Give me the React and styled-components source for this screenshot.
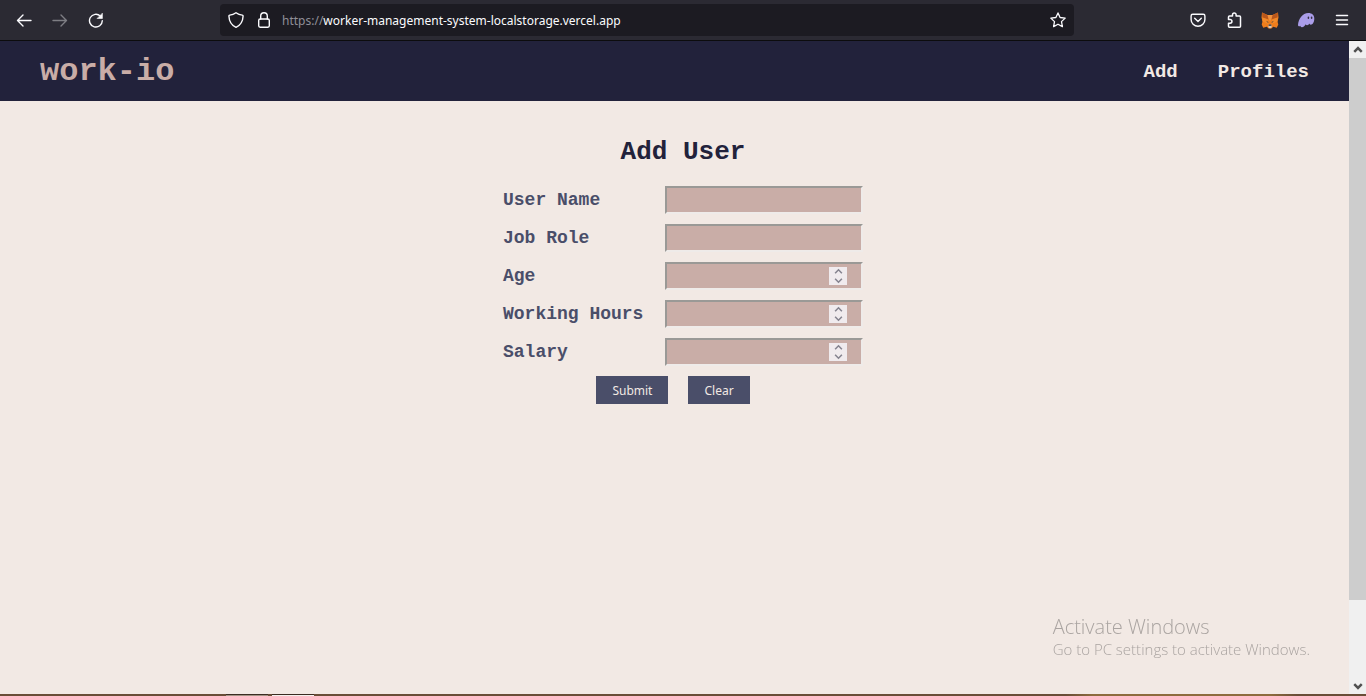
import React, { useRef } from "react";
import styled, { createGlobalStyle } from "styled-components";

const mono = '"Liberation Mono", "Courier New", monospace';
const sans = '"Noto Sans", "Open Sans", sans-serif';
const light = '"Open Sans", "Noto Sans", sans-serif';

const GlobalStyle = createGlobalStyle`
  *, *::before, *::after { box-sizing: border-box; }
  body { margin: 0; background: #f2e9e4; font-family: ${sans}; }
  button, input { font: inherit; }
`;

const Window = styled.div`
  display: flex;
  flex-direction: column;
  min-height: 100vh;
`;

const Toolbar = styled.div`
  display: flex;
  align-items: center;
  height: 41px;
  padding: 0 12px;
  background: #2b2a33;
  border-bottom: 1px solid #0c0c0d;
`;

const ToolGroup = styled.div`
  display: flex;
  align-items: center;
  gap: 12px;
`;

const IconButton = styled.button`
  display: flex;
  align-items: center;
  justify-content: center;
  flex: none;
  width: 24px;
  height: 24px;
  padding: 0;
  border: 0;
  background: none;
  color: #fbfbfe;
  opacity: ${(p) => (p.disabled ? 0.4 : 1)};
`;

const AddressBar = styled.div`
  display: flex;
  align-items: center;
  flex: 1;
  gap: 4px;
  height: 32px;
  margin: 0 112px;
  padding: 0 4px;
  border-radius: 4px;
  background: #1c1b22;
`;

const Url = styled.a`
  flex: 1;
  margin-left: 2px;
  padding-top: 2px;
  color: #fbfbfe;
  font-size: 12px;
  line-height: 20px;
  text-decoration: none;
  white-space: nowrap;
`;

const Scheme = styled.span`
  color: #8f8f98;
`;

const Viewport = styled.div`
  display: flex;
  flex: 1;
`;

const Page = styled.div`
  display: flex;
  flex-direction: column;
  flex: 1;
  min-width: 0;
  background: #f2e9e4;
`;

const Header = styled.header`
  display: flex;
  align-items: center;
  justify-content: space-between;
  height: 60px;
  padding: 2px 40px 0;
  background: #22223b;
  font-family: ${mono};
  font-weight: 700;
`;

const Brand = styled.a`
  color: #c9ada7;
  font-size: 32px;
  line-height: 36px;
  text-decoration: none;
`;

const Nav = styled.nav`
  display: flex;
  gap: 40px;
`;

const NavLink = styled.a`
  color: #f2e9e4;
  font-size: 19px;
  line-height: 24px;
  text-decoration: none;
`;

const Main = styled.main`
  display: flex;
  flex-direction: column;
  align-items: center;
  flex: 1;
  padding: 36px 0 0 17px;
`;

const Title = styled.h1`
  margin: 0 0 18px;
  color: #22223b;
  font-family: ${mono};
  font-size: 26px;
  font-weight: 700;
  line-height: 31px;
`;

const Form = styled.form`
  display: flex;
  flex-direction: column;
  gap: 10px;
`;

const Row = styled.div`
  display: grid;
  grid-template-columns: 162px 198px;
  align-items: center;
`;

const Label = styled.label`
  color: #4a4e69;
  font-family: ${mono};
  font-size: 18px;
  font-weight: 700;
  line-height: 24px;
`;

const Control = styled.div`
  position: relative;
  display: flex;
`;

const Input = styled.input`
  width: 100%;
  height: 28px;
  padding: 0 14px 0 6px;
  border: 2px solid;
  border-color: #9a9996 #efebe9 #efebe9 #9a9996;
  border-radius: 0;
  outline: 0;
  background: #c9ada7;
  color: #22223b;
  font-size: 12px;
  appearance: textfield;

  &::-webkit-inner-spin-button {
    appearance: none;
  }
`;

const Stepper = styled.div`
  position: absolute;
  top: 5px;
  right: 16px;
  display: flex;
  flex-direction: column;
  width: 18px;
  height: 18px;
  background: #f0ebee;
`;

const Step = styled.button`
  display: flex;
  align-items: center;
  justify-content: center;
  flex: 1;
  padding: 0;
  border: 0;
  background: none;
  color: #85838f;
`;

const Actions = styled.div`
  display: flex;
  justify-content: center;
`;

const Button = styled.button`
  height: 28px;
  margin-right: 20px;
  padding: 2px 16px 0;
  border: 0;
  background: #4a4e69;
  color: #f2e9e4;
  font-size: 12px;
  line-height: 20px;
`;

const Watermark = styled.aside`
  position: fixed;
  right: 56px;
  bottom: 37px;
  color: #aaa4a1;
  font-family: ${light};
  font-weight: 300;
`;

const WatermarkTitle = styled.div`
  font-size: 20px;
  line-height: 24px;
`;

const WatermarkText = styled.div`
  font-size: 15px;
  line-height: 20px;
`;

const Scrollbar = styled.div`
  display: flex;
  flex-direction: column;
  width: 17px;
  background: #f0f0f0;
`;

const ScrollArrow = styled.div`
  display: flex;
  align-items: center;
  justify-content: center;
  height: 17px;
  color: #505050;
`;

const Thumb = styled.div`
  flex: 7;
  background: #cdcdcd;
`;

const ThumbRest = styled.div`
  flex: 1;
`;

const Taskbar = styled.div`
  display: flex;
  height: 2px;
  padding-left: 226px;
  gap: 4px;
  background: linear-gradient(90deg, #694d37 0 78%, #8d6b3d 80% 93%, #694d37 95%);
`;

const TaskItem = styled.div`
  width: 42px;
  border-top: 1px solid #3b2c22;
  background: ${(p) => (p.$active ? "#f5efec" : "#a39385")};
`;

function Stroke({ children, size = 16, width = 1.4 }) {
  return (
    <svg width={size} height={size} viewBox="0 0 16 16" fill="none" stroke="currentColor"
      strokeWidth={width} strokeLinecap="round" strokeLinejoin="round" aria-hidden="true">
      {children}
    </svg>
  );
}

const BackIcon = () => <Stroke><path d="M15 8.5H1.5M7 3 1.5 8.5 7 14" /></Stroke>;
const ForwardIcon = () => <Stroke><path d="M1 8.5h13.5M9 3l5.500 5.500L9 14" /></Stroke>;
const ReloadIcon = () => (
  <Stroke>
    <path d="M14.300 8.800A6.400 6.400 0 1 1 12.300 4" />
    <path d="M14.400 1.500v5h-5z" fill="currentColor" strokeWidth="0.6" />
  </Stroke>
);
const ShieldIcon = () => (
  <Stroke>
    <path d="M8 .8c2 1.500 4.300 2.200 6.300 2.300.5.1.8.400.8.900-.2 5.200-2.500 9.200-7.100 11.300C3.400 13.200 1.100 9.200.9 4c0-.5.300-.8.8-.9C3.700 3 6 2.300 8 .8z" />
  </Stroke>
);
const LockIcon = () => (
  <Stroke>
    <rect x="2.700" y="7" width="10.600" height="8.200" rx="1.400" />
    <path d="M4.700 7V4a3.300 3.300 0 0 1 6.600 0v3" />
  </Stroke>
);
const StarIcon = () => (
  <Stroke width={1.3}>
    <path d="m8 .9 2.100 4.600 5.100.6-3.700 3.500.9 5-4.400-2.400-4.400 2.400.9-5L.8 6.100l5.100-.6z" />
  </Stroke>
);
const PocketIcon = () => (
  <Stroke>
    <path d="M2.700 2.300h10.600c.9 0 1.600.7 1.600 1.600v3.500a6.900 6.900 0 0 1-13.800 0V3.900c0-.9.7-1.600 1.600-1.600z" />
    <path d="m4.700 6.300 3.300 3.200 3.300-3.200" />
  </Stroke>
);
const PuzzleIcon = () => (
  <Stroke width={1.5}>
    <path d="M2.500 6V5c0-.6.4-1 1-1h3V2.700a1.800 1.800 0 0 1 3.600 0V4h3.400c.6 0 1 .4 1 1v9.200c0 .6-.4 1-1 1h-10c-.6 0-1-.4-1-1v-3h1.600a1.800 1.800 0 0 0 0-3.700H2.500z" />
  </Stroke>
);
const FoxIcon = () => (
  <svg width="18" height="18" viewBox="0 0 18 18" aria-hidden="true">
    <path d="M1 1.500 6.500 4h5L17 1.500l.5 5-1 4 .8 3-1.500 3.300-3.600-1-1.700 1.700h-3l-1.700-1.700-3.600 1L.7 13.500l.8-3-1-4z" fill="#ee7d1c" />
    <path d="M1 1.500 6.500 4 8 8.500l-6.500-2zM17 1.500 11.500 4 10 8.500l6.500-2z" fill="#b9571c" />
    <path d="M6.500 4h5L10 9.500H8z" fill="#f0923e" />
    <path d="m1.500 6.500 5 2 1 4.500-6-2.500zM16.500 6.500l-5 2-1 4.500 6-2.500z" fill="#f28a2a" />
    <path d="m5 9.800 2.300 1.200-.2 1zM13 9.800 10.700 11l.2 1z" fill="#31363f" />
    <path d="m7.500 14.500.3-1h2.400l.3 1 .2 2-1.200.7h-1l-1.200-.7z" fill="#d7c6b7" />
    <path d="M7.800 13.500h2.400l.3 1.200h-3z" fill="#292b30" />
  </svg>
);
const GhostIcon = () => (
  <svg width="18" height="18" viewBox="0 0 18 18" aria-hidden="true">
    <path d="M1 14C1.500 7.800 5.500 2 11.300 2c3.700 0 6 2.200 6 5.500 0 3.600-1.700 6.200-3.500 6.200-.8 0-1.300-.5-1.400-1.200-.6 1-1.400 1.700-2.300 1.700-.7 0-1.100-.4-1.300-.9-.8 1.300-2.200 2.900-4 2.900-1 0-1.400-.6-1.300-1.400-.7.900-2.600.7-2.500-.8z" fill="#aa9de9" />
    <ellipse cx="11.400" cy="6.800" rx=".8" ry="1.300" fill="#373145" />
    <ellipse cx="14.600" cy="6.800" rx=".8" ry="1.300" fill="#373145" />
  </svg>
);
const MenuIcon = () => <Stroke width={1.5}><path d="M2.500 3.500h11M2.500 8h11M2.500 12.500h11" /></Stroke>;

function Chevron({ down, size = 9, width = 1.4 }) {
  return (
    <svg width={size} height={size} viewBox="0 0 8 8" fill="none" stroke="currentColor"
      strokeWidth={width} aria-hidden="true">
      <path d={down ? "M1 2.500 4 5.500 7 2.500" : "M1 5.500 4 2.500 7 5.500"} />
    </svg>
  );
}

function Field({ id, label, type = "text" }) {
  const input = useRef(null);
  return (
    <Row>
      <Label htmlFor={id}>{label}</Label>
      <Control>
        <Input id={id} name={id} type={type} ref={input} />
        {type === "number" && (
          <Stepper>
            <Step type="button" aria-label={`Increase ${label}`} onClick={() => input.current.stepUp()}>
              <Chevron />
            </Step>
            <Step type="button" aria-label={`Decrease ${label}`} onClick={() => input.current.stepDown()}>
              <Chevron down />
            </Step>
          </Stepper>
        )}
      </Control>
    </Row>
  );
}

export default function App() {
  return (
    <Window>
      <GlobalStyle />
      <Toolbar>
        <ToolGroup>
          <IconButton aria-label="Back"><BackIcon /></IconButton>
          <IconButton aria-label="Forward" disabled><ForwardIcon /></IconButton>
          <IconButton aria-label="Reload"><ReloadIcon /></IconButton>
        </ToolGroup>
        <AddressBar>
          <IconButton aria-label="Tracking protection"><ShieldIcon /></IconButton>
          <IconButton aria-label="Connection security"><LockIcon /></IconButton>
          <Url href="#"><Scheme>https://</Scheme>worker-management-system-localstorage.vercel.app</Url>
          <IconButton aria-label="Bookmark this page"><StarIcon /></IconButton>
        </AddressBar>
        <ToolGroup>
          <IconButton aria-label="Pocket"><PocketIcon /></IconButton>
          <IconButton aria-label="Extensions"><PuzzleIcon /></IconButton>
          <IconButton aria-label="Fox wallet"><FoxIcon /></IconButton>
          <IconButton aria-label="Ghost wallet"><GhostIcon /></IconButton>
          <IconButton aria-label="Menu"><MenuIcon /></IconButton>
        </ToolGroup>
      </Toolbar>
      <Viewport>
        <Page>
          <Header>
            <Brand href="#">work-io</Brand>
            <Nav>
              <NavLink href="#add">Add</NavLink>
              <NavLink href="#profiles">Profiles</NavLink>
            </Nav>
          </Header>
          <Main>
            <Title>Add User</Title>
            <Form onSubmit={(e) => e.preventDefault()}>
              <Field id="name" label="User Name" />
              <Field id="role" label="Job Role" />
              <Field id="age" label="Age" type="number" />
              <Field id="hours" label="Working Hours" type="number" />
              <Field id="salary" label="Salary" type="number" />
              <Actions>
                <Button type="submit">Submit</Button>
                <Button type="reset">Clear</Button>
              </Actions>
            </Form>
          </Main>
        </Page>
        <Scrollbar aria-hidden="true">
          <ScrollArrow><Chevron size={10} width={2} /></ScrollArrow>
          <Thumb />
          <ThumbRest />
          <ScrollArrow><Chevron down size={10} width={2} /></ScrollArrow>
        </Scrollbar>
      </Viewport>
      <Taskbar>
        <TaskItem />
        <TaskItem $active />
      </Taskbar>
      <Watermark>
        <WatermarkTitle>Activate Windows</WatermarkTitle>
        <WatermarkText>Go to PC settings to activate Windows.</WatermarkText>
      </Watermark>
    </Window>
  );
}
